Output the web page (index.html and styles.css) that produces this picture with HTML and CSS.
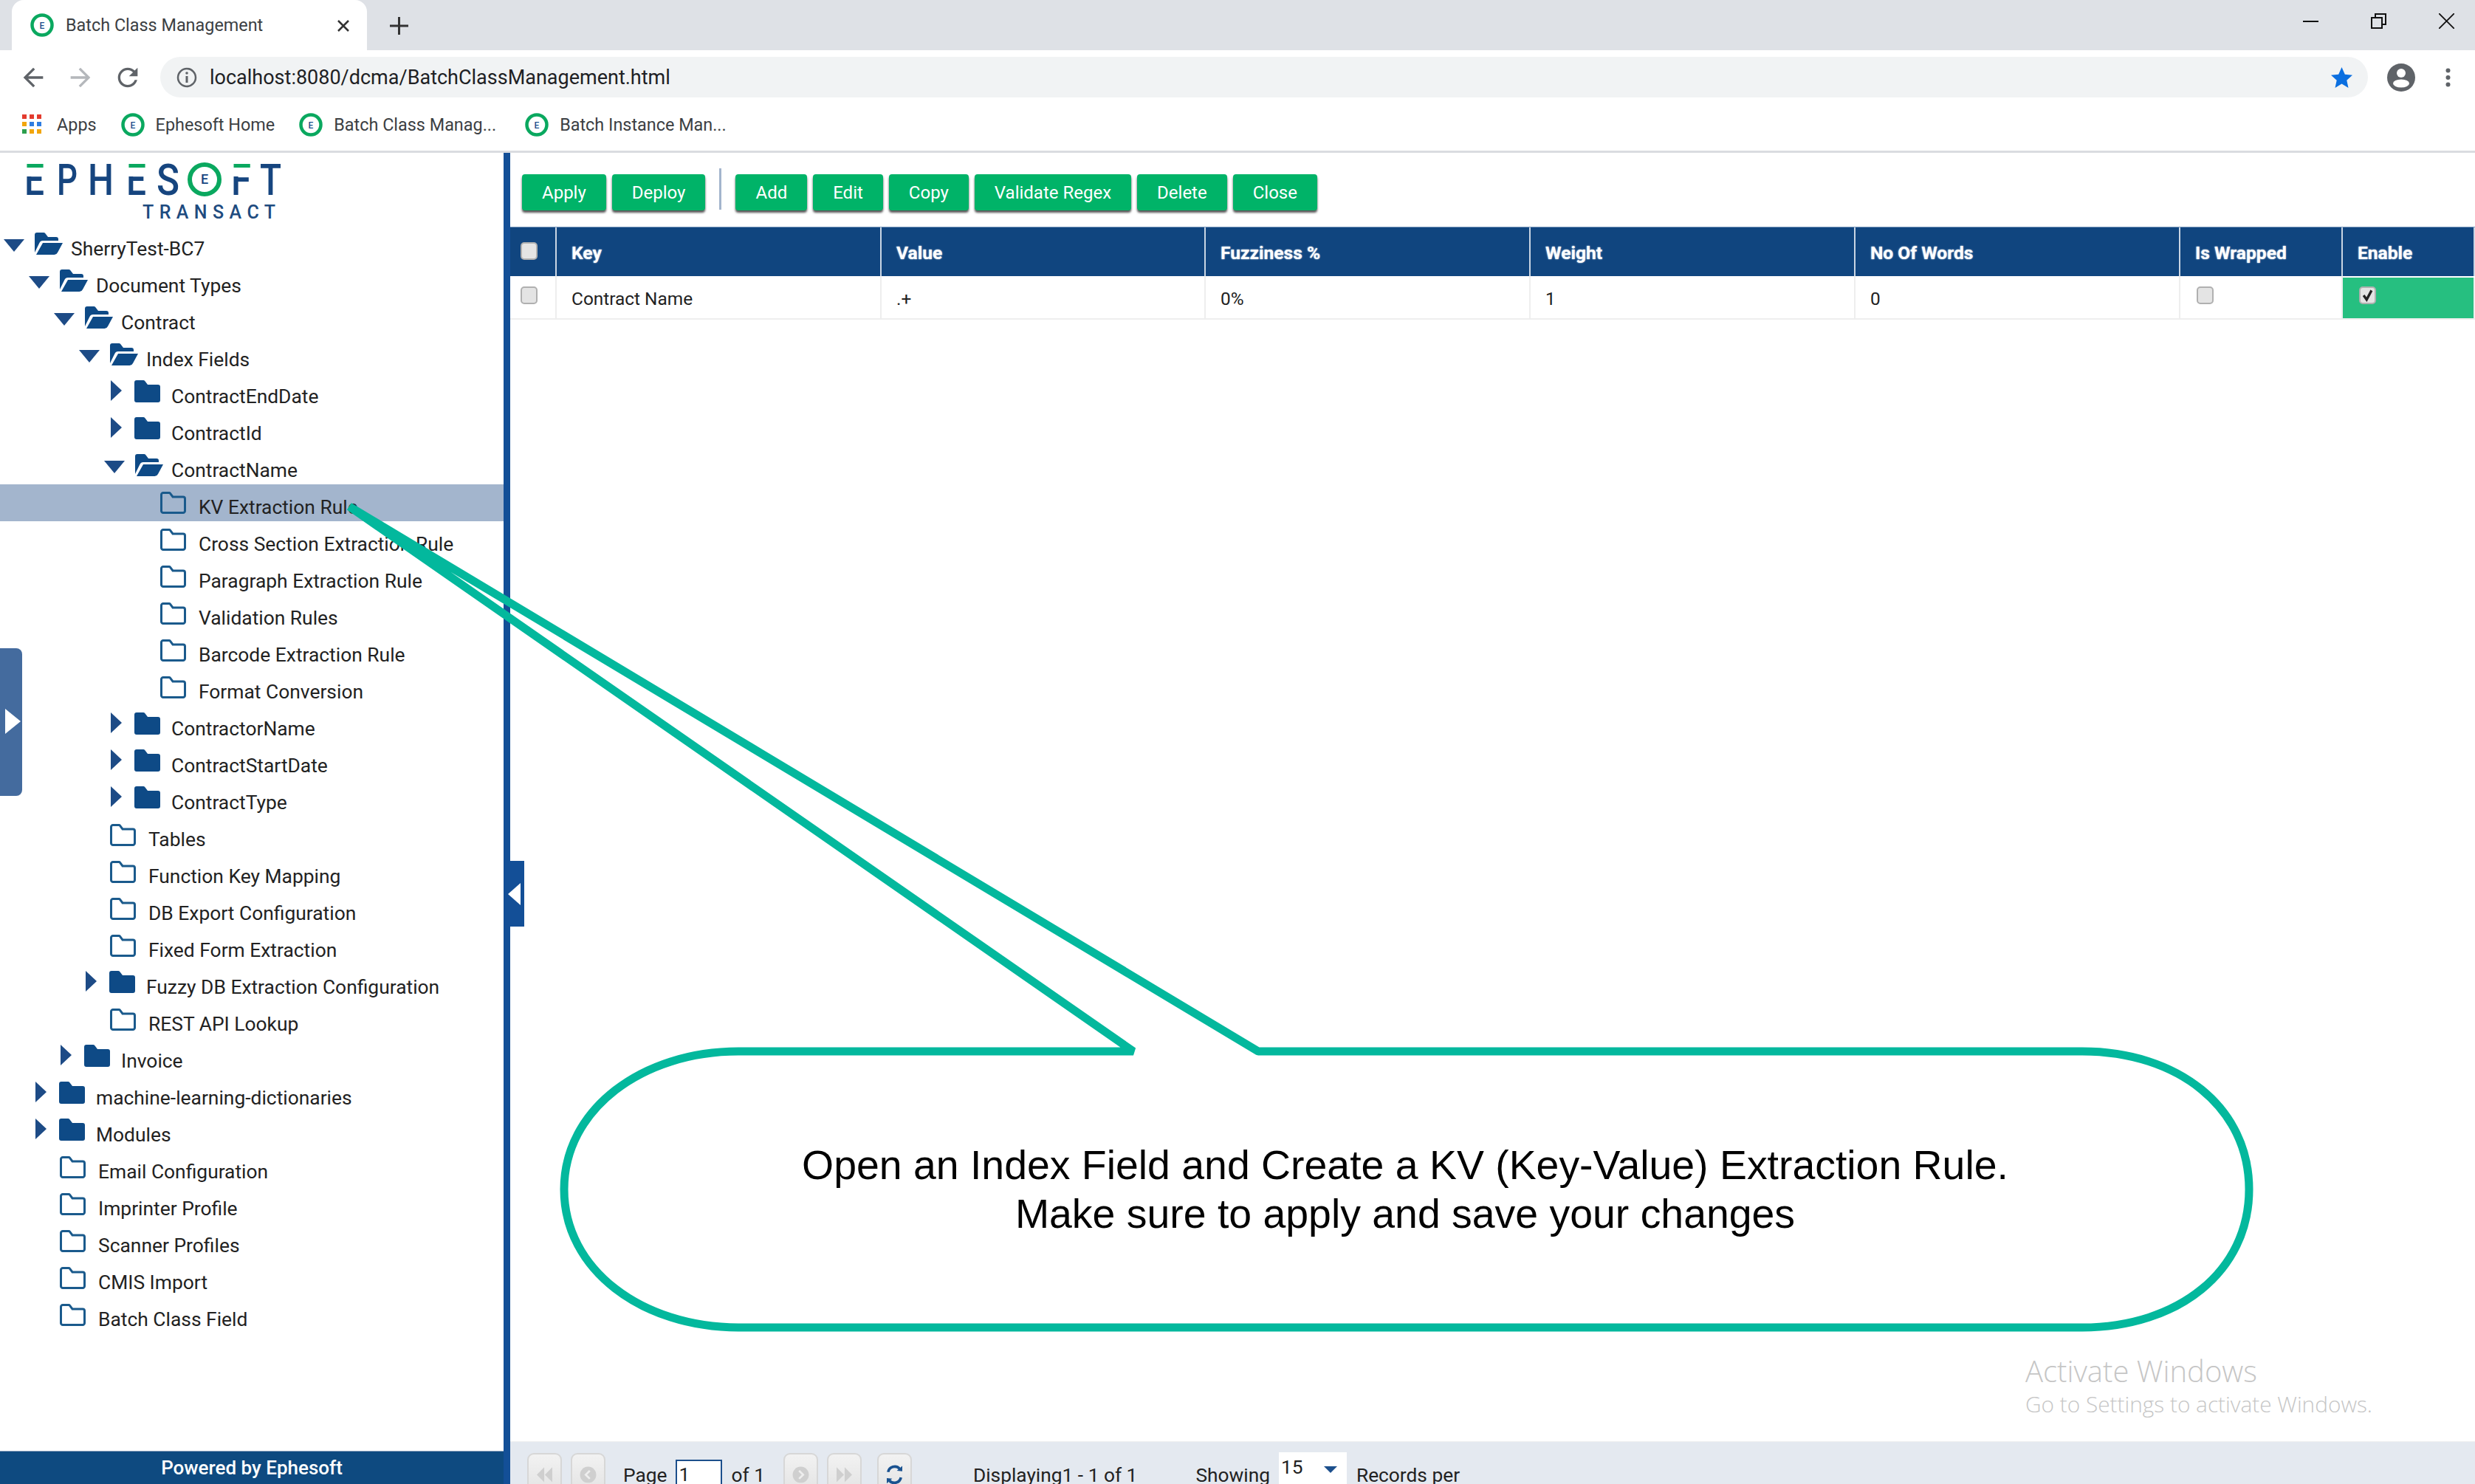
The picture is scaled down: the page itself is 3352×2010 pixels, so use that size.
FILE: index.html
```html
<!DOCTYPE html>
<html>
<head>
    <meta charset="utf-8">
    <title>Batch Class Management</title>
    <link rel="stylesheet" href="styles.css">
</head>
<body>
    <svg class="icon-defs" width="0" height="0">
        <symbol id="fav" viewBox="0 0 32 32">
            <ellipse cx="16" cy="16" rx="13.5" ry="13.5" fill="none" stroke="#0aa85f" stroke-width="4.5"/>
            <text x="16" y="20.500" text-anchor="middle" font-family="Roboto" font-size="12" font-weight="500" fill="#1d4f8c">E</text>
        </symbol>
        <symbol id="folder-closed" viewBox="0 0 35 30">
            <path d="M3 0h9a3 3 0 0 1 2.4 1.2L18 6h14a3 3 0 0 1 3 3v18a3 3 0 0 1-3 3H3a3 3 0 0 1-3-3V3a3 3 0 0 1 3-3z" fill="#0e4a86"/>
        </symbol>
        <symbol id="folder-open" viewBox="0 0 39 30">
            <path d="M4 0h9a3 3 0 0 1 2.4 1.2L19 6h11a3 3 0 0 1 3 3v2H12a5 5 0 0 0-4.6 3L1 27V3a3 3 0 0 1 3-3z" fill="#0e4a86"/>
            <path d="M12 14h27l-7 13a5 5 0 0 1-4.400 3H3z" fill="#0e4a86"/>
        </symbol>
        <symbol id="folder-leaf" viewBox="0 0 35 30">
            <path d="M4 1.500h8a2 2 0 0 1 1.600.800L17 7h14a2.500 2.500 0 0 1 2.500 2.500V26a2.500 2.500 0 0 1-2.500 2.500H4A2.500 2.500 0 0 1 1.500 26V4A2.500 2.500 0 0 1 4 1.500z" fill="none" stroke="#1a5a8c" stroke-width="3"/>
        </symbol>
    </svg>

    <div class="browser">
        <div class="tabstrip">
            <div class="tab">
                <svg class="fav-tab"><use href="#fav"/></svg>
                <span class="tab-title">Batch Class Management</span>
                <svg class="tab-close" viewBox="0 0 18 16"><path d="M2 1l14 14M16 1L2 15" stroke="#333" stroke-width="2.500"/></svg>
            </div>
            <svg class="new-tab" viewBox="0 0 25 24"><path d="M12.500 0v24M0 12h25" stroke="#333" stroke-width="3"/></svg>
            <div class="win-controls">
                <svg class="win-btn" viewBox="0 0 21 21"><path d="M0 11h21" stroke="#111" stroke-width="2"/></svg>
                <svg class="win-btn" viewBox="0 0 21 21"><path d="M1 6h14v14H1zM6 6V1h14v14h-5" fill="none" stroke="#111" stroke-width="2"/></svg>
                <svg class="win-btn" viewBox="0 0 21 21"><path d="M0 0l21 21M21 0L0 21" stroke="#111" stroke-width="1.800"/></svg>
            </div>
        </div>

        <div class="navbar">
            <svg class="nav-icon" viewBox="0 0 24 24"><path d="M20 11H7.830l5.590-5.590L12 4l-8 8 8 8 1.410-1.410L7.830 13H20v-2z" fill="#5f6368"/></svg>
            <svg class="nav-icon" viewBox="0 0 24 24"><path d="M4 11h12.170l-5.590-5.590L12 4l8 8-8 8-1.410-1.410L16.170 13H4v-2z" fill="#b4b7bb"/></svg>
            <svg class="nav-icon" viewBox="0 0 24 24"><path d="M17.650 6.350C16.200 4.900 14.210 4 12 4c-4.420 0-7.990 3.580-7.990 8s3.570 8 7.990 8c3.730 0 6.840-2.550 7.730-6h-2.080c-.82 2.330-3.040 4-5.650 4-3.310 0-6-2.690-6-6s2.690-6 6-6c1.660 0 3.140.69 4.220 1.780L13 11h7V4l-2.350 2.350z" fill="#5f6368"/></svg>
            <div class="address">
                <svg class="info-icon" viewBox="0 0 28 28">
                    <circle cx="14" cy="14" r="12" fill="none" stroke="#5f6368" stroke-width="2.500"/>
                    <path d="M14 12v9" stroke="#5f6368" stroke-width="3"/>
                    <circle cx="14" cy="8" r="1.800" fill="#5f6368"/>
                </svg>
                <span class="url">localhost:8080/dcma/BatchClassManagement.html</span>
                <svg class="star" viewBox="0 0 29 28"><path d="M14.500 0l4.300 9.700 10.200 1-7.700 7 2.200 10.300-9-5.400-9 5.400 2.200-10.300-7.700-7 10.200-1z" fill="#0b6fe0"/></svg>
            </div>
            <svg class="avatar" viewBox="0 0 38 38">
                <circle cx="19" cy="19" r="19" fill="#5f6368"/>
                <circle cx="19" cy="13" r="6" fill="#fff"/>
                <ellipse cx="19" cy="27" rx="11" ry="5.500" fill="#fff"/>
            </svg>
            <svg class="dots" viewBox="0 0 7 26">
                <circle cx="3.500" cy="3.500" r="3" fill="#5f6368"/>
                <circle cx="3.500" cy="13" r="3" fill="#5f6368"/>
                <circle cx="3.500" cy="22.500" r="3" fill="#5f6368"/>
            </svg>
        </div>

        <div class="bookmarks">
            <svg class="apps-icon" viewBox="0 0 26 27">
                <rect x="0" y="0" width="6" height="6" fill="#e33b2e"/><rect x="10" y="0" width="6" height="6" fill="#e33b2e"/><rect x="20" y="0" width="6" height="6" fill="#e33b2e"/>
                <rect x="0" y="10" width="6" height="6" fill="#f2a60c"/><rect x="10" y="10" width="6" height="6" fill="#2f7de1"/><rect x="20" y="10" width="6" height="6" fill="#2f7de1"/>
                <rect x="0" y="20" width="6" height="6" fill="#2d9f4e"/><rect x="10" y="20" width="6" height="6" fill="#f2a60c"/><rect x="20" y="20" width="6" height="6" fill="#f2a60c"/>
            </svg>
            <span class="bm-text bm-apps">Apps</span>
            <svg class="fav-bm"><use href="#fav"/></svg>
            <span class="bm-text">Ephesoft Home</span>
            <svg class="fav-bm"><use href="#fav"/></svg>
            <span class="bm-text bm-elided">Batch Class Manag...</span>
            <svg class="fav-bm"><use href="#fav"/></svg>
            <span class="bm-text">Batch Instance Man...</span>
        </div>

        <div class="app">
            <div class="sidebar">
                <svg class="logo" viewBox="0 0 400 99">
                    <defs>
                        <linearGradient id="bar-e" gradientUnits="userSpaceOnUse" x1="0" y1="14" x2="0" y2="58">
                            <stop offset="0" stop-color="#0aa85f"/><stop offset=".125" stop-color="#0aa85f"/>
                            <stop offset=".125" stop-color="#fff"/><stop offset=".42" stop-color="#fff"/>
                            <stop offset=".42" stop-color="#16457f"/><stop offset="1" stop-color="#16457f"/>
                        </linearGradient>
                    </defs>
                    <g class="logo-word">
                        <text x="33" y="57" textLength="27" lengthAdjust="spacingAndGlyphs" fill="url(#bar-e)">E</text>
                        <text x="77" y="57" textLength="28" lengthAdjust="spacingAndGlyphs">P</text>
                        <text x="119" y="57" textLength="35" lengthAdjust="spacingAndGlyphs">H</text>
                        <text x="171" y="57" textLength="27" lengthAdjust="spacingAndGlyphs" fill="url(#bar-e)">E</text>
                        <text x="212" y="57" textLength="31" lengthAdjust="spacingAndGlyphs">S</text>
                        <text x="313" y="57" textLength="27" lengthAdjust="spacingAndGlyphs" fill="url(#bar-e)">F</text>
                        <text x="352" y="57" textLength="29" lengthAdjust="spacingAndGlyphs">T</text>
                    </g>
                    <circle cx="277" cy="36" r="20" fill="none" stroke="#0aa85f" stroke-width="6"/>
                    <text class="logo-mini" x="277" y="42" text-anchor="middle">E</text>
                    <text class="logo-sub" x="193" y="89" textLength="180" lengthAdjust="spacing">TRANSACT</text>
                </svg>

                <div class="tree">
                    <div class="row lvl-0"><span class="slot"><i class="arrow-down"></i></span><svg class="ic-open"><use href="#folder-open"/></svg><span class="label">SherryTest-BC7</span></div>
                    <div class="row lvl-1"><span class="slot"><i class="arrow-down"></i></span><svg class="ic-open"><use href="#folder-open"/></svg><span class="label">Document Types</span></div>
                    <div class="row lvl-2"><span class="slot"><i class="arrow-down"></i></span><svg class="ic-open"><use href="#folder-open"/></svg><span class="label">Contract</span></div>
                    <div class="row lvl-3"><span class="slot"><i class="arrow-down"></i></span><svg class="ic-open"><use href="#folder-open"/></svg><span class="label">Index Fields</span></div>
                    <div class="row lvl-4"><span class="slot"><i class="arrow-right"></i></span><svg class="ic-closed"><use href="#folder-closed"/></svg><span class="label">ContractEndDate</span></div>
                    <div class="row lvl-4"><span class="slot"><i class="arrow-right"></i></span><svg class="ic-closed"><use href="#folder-closed"/></svg><span class="label">ContractId</span></div>
                    <div class="row lvl-4"><span class="slot"><i class="arrow-down"></i></span><svg class="ic-open"><use href="#folder-open"/></svg><span class="label">ContractName</span></div>
                    <div class="row lvl-5 selected"><span class="slot slot-leaf"></span><svg class="ic-leaf"><use href="#folder-leaf"/></svg><span class="label">KV Extraction Rule</span></div>
                    <div class="row lvl-5"><span class="slot slot-leaf"></span><svg class="ic-leaf"><use href="#folder-leaf"/></svg><span class="label">Cross Section Extraction Rule</span></div>
                    <div class="row lvl-5"><span class="slot slot-leaf"></span><svg class="ic-leaf"><use href="#folder-leaf"/></svg><span class="label">Paragraph Extraction Rule</span></div>
                    <div class="row lvl-5"><span class="slot slot-leaf"></span><svg class="ic-leaf"><use href="#folder-leaf"/></svg><span class="label">Validation Rules</span></div>
                    <div class="row lvl-5"><span class="slot slot-leaf"></span><svg class="ic-leaf"><use href="#folder-leaf"/></svg><span class="label">Barcode Extraction Rule</span></div>
                    <div class="row lvl-5"><span class="slot slot-leaf"></span><svg class="ic-leaf"><use href="#folder-leaf"/></svg><span class="label">Format Conversion</span></div>
                    <div class="row lvl-4"><span class="slot"><i class="arrow-right"></i></span><svg class="ic-closed"><use href="#folder-closed"/></svg><span class="label">ContractorName</span></div>
                    <div class="row lvl-4"><span class="slot"><i class="arrow-right"></i></span><svg class="ic-closed"><use href="#folder-closed"/></svg><span class="label">ContractStartDate</span></div>
                    <div class="row lvl-4"><span class="slot"><i class="arrow-right"></i></span><svg class="ic-closed"><use href="#folder-closed"/></svg><span class="label">ContractType</span></div>
                    <div class="row lvl-3"><span class="slot slot-leaf"></span><svg class="ic-leaf"><use href="#folder-leaf"/></svg><span class="label">Tables</span></div>
                    <div class="row lvl-3"><span class="slot slot-leaf"></span><svg class="ic-leaf"><use href="#folder-leaf"/></svg><span class="label">Function Key Mapping</span></div>
                    <div class="row lvl-3"><span class="slot slot-leaf"></span><svg class="ic-leaf"><use href="#folder-leaf"/></svg><span class="label">DB Export Configuration</span></div>
                    <div class="row lvl-3"><span class="slot slot-leaf"></span><svg class="ic-leaf"><use href="#folder-leaf"/></svg><span class="label">Fixed Form Extraction</span></div>
                    <div class="row lvl-3"><span class="slot"><i class="arrow-right"></i></span><svg class="ic-closed"><use href="#folder-closed"/></svg><span class="label">Fuzzy DB Extraction Configuration</span></div>
                    <div class="row lvl-3"><span class="slot slot-leaf"></span><svg class="ic-leaf"><use href="#folder-leaf"/></svg><span class="label">REST API Lookup</span></div>
                    <div class="row lvl-2"><span class="slot"><i class="arrow-right"></i></span><svg class="ic-closed"><use href="#folder-closed"/></svg><span class="label">Invoice</span></div>
                    <div class="row lvl-1"><span class="slot"><i class="arrow-right"></i></span><svg class="ic-closed"><use href="#folder-closed"/></svg><span class="label">machine-learning-dictionaries</span></div>
                    <div class="row lvl-1"><span class="slot"><i class="arrow-right"></i></span><svg class="ic-closed"><use href="#folder-closed"/></svg><span class="label">Modules</span></div>
                    <div class="row lvl-1"><span class="slot slot-leaf"></span><svg class="ic-leaf"><use href="#folder-leaf"/></svg><span class="label">Email Configuration</span></div>
                    <div class="row lvl-1"><span class="slot slot-leaf"></span><svg class="ic-leaf"><use href="#folder-leaf"/></svg><span class="label">Imprinter Profile</span></div>
                    <div class="row lvl-1"><span class="slot slot-leaf"></span><svg class="ic-leaf"><use href="#folder-leaf"/></svg><span class="label">Scanner Profiles</span></div>
                    <div class="row lvl-1"><span class="slot slot-leaf"></span><svg class="ic-leaf"><use href="#folder-leaf"/></svg><span class="label">CMIS Import</span></div>
                    <div class="row lvl-1"><span class="slot slot-leaf"></span><svg class="ic-leaf"><use href="#folder-leaf"/></svg><span class="label">Batch Class Field</span></div>
                </div>

                <div class="powered">Powered by Ephesoft</div>
            </div>

            <div class="divider"></div>

            <div class="main">
                <div class="actions">
                    <button class="btn">Apply</button>
                    <button class="btn">Deploy</button>
                    <span class="sep"></span>
                    <button class="btn">Add</button>
                    <button class="btn">Edit</button>
                    <button class="btn">Copy</button>
                    <button class="btn">Validate Regex</button>
                    <button class="btn">Delete</button>
                    <button class="btn">Close</button>
                </div>

                <div class="grid grid-head">
                    <div class="cell cell-check"><span class="check"></span></div>
                    <div class="cell">Key</div>
                    <div class="cell">Value</div>
                    <div class="cell">Fuzziness %</div>
                    <div class="cell">Weight</div>
                    <div class="cell">No Of Words</div>
                    <div class="cell">Is Wrapped</div>
                    <div class="cell">Enable</div>
                </div>
                <div class="grid grid-row">
                    <div class="cell cell-check"><span class="check"></span></div>
                    <div class="cell">Contract Name</div>
                    <div class="cell">.+</div>
                    <div class="cell">0%</div>
                    <div class="cell">1</div>
                    <div class="cell">0</div>
                    <div class="cell cell-box"><span class="check"></span></div>
                    <div class="cell cell-box cell-on">
                        <span class="check"><svg viewBox="0 0 23 24"><path d="M5 12l5 7 8-15" fill="none" stroke="#222" stroke-width="4"/></svg></span>
                    </div>
                </div>

                <div class="grid-empty"></div>

                <div class="pager">
                    <span class="pg-btn pg-first"><svg viewBox="0 0 47 46"><path d="M23 19L12 30l11 11zM35 19L24 30l11 11z" fill="#cfcfcf"/></svg></span>
                    <span class="pg-btn"><svg viewBox="0 0 47 46"><circle cx="23.500" cy="30" r="12" fill="#cfcfcf"/><path d="M26 24l-6 6 6 6" fill="none" stroke="#eee" stroke-width="3"/></svg></span>
                    <span class="pg-text pg-page">Page</span>
                    <span class="pg-input">1</span>
                    <span class="pg-text pg-of">of 1</span>
                    <span class="pg-btn pg-next"><svg viewBox="0 0 47 46"><circle cx="23.500" cy="30" r="12" fill="#cfcfcf"/><path d="M21 24l6 6-6 6" fill="none" stroke="#eee" stroke-width="3"/></svg></span>
                    <span class="pg-btn"><svg viewBox="0 0 47 46"><path d="M12 19l11 11-11 11zM24 19l11 11-11 11z" fill="#cfcfcf"/></svg></span>
                    <span class="pg-btn pg-refresh"><svg viewBox="0 0 47 46"><path d="M14 26a10 10 0 0 1 17-5M33 34a10 10 0 0 1-17 5" fill="none" stroke="#1a5290" stroke-width="4"/><path d="M27 24l8 1v-8zM20 36l-8-1v8z" fill="#1a5290"/></svg></span>
                    <span class="pg-text pg-display">Displaying1 - 1 of 1</span>
                    <span class="pg-text pg-showing">Showing</span>
                    <span class="pg-select">15<i class="pg-caret"></i></span>
                    <span class="pg-text pg-records">Records per</span>
                </div>
            </div>
        </div>
    </div>

    <!-- things drawn over the page -->
    <div class="handle-left"><i class="tri-right"></i></div>
    <div class="handle-mid"><i class="tri-left"></i></div>

    <svg class="callout" viewBox="0 0 3352 2010">
        <path d="M2820 1424C2950 1424 3046 1500 3046 1611S2950 1798 2820 1798H1000C870 1798 764 1720 764 1611S870 1424 1000 1424H1535L473 686 1704 1424Z" fill="none" stroke="#03b89d" stroke-width="11" stroke-linejoin="bevel"/>
    </svg>
    <div class="callout-text">Open an Index Field and Create a KV (Key-Value) Extraction Rule.<br>Make sure to apply and save your changes</div>

    <div class="activate">
        <div class="activate-big">Activate Windows</div>
        <div class="activate-small">Go to Settings to activate Windows.</div>
    </div>
</body>
</html>
```

FILE: styles.css
```css
html, body {
    margin: 0;
    padding: 0;
    width: 3352px;
    height: 2010px;
    overflow: hidden;
    background: white;
    font-family: Roboto, "Liberation Sans", sans-serif;
    color: #222;
}

.icon-defs {
    position: absolute;
}

.browser {
    display: flex;
    flex-direction: column;
    height: 2010px;
}

/* browser chrome */
.tabstrip {
    display: flex;
    align-items: flex-start;
    height: 68px;
    background: #dee1e6;
    flex: none;
}

.tab {
    position: relative;
    display: flex;
    align-items: center;
    width: 481px;
    height: 68px;
    margin-left: 16px;
    background: white;
    border-radius: 16px 16px 0 0;
    box-sizing: border-box;
    padding-left: 25px;
}

.fav-tab {
    width: 32px;
    height: 32px;
}

.tab-title {
    margin-left: 16px;
    font-size: 23.4px;
    color: #3c4043;
}

.tab-close {
    position: absolute;
    left: 440px;
    top: 27px;
    width: 18px;
    height: 16px;
}

.new-tab {
    width: 25px;
    height: 24px;
    margin: 23px 0 0 31px;
}

.win-controls {
    display: flex;
    gap: 71px;
    margin: 18px 28px 0 auto;
}

.win-btn {
    width: 21px;
    height: 21px;
}

.navbar {
    display: flex;
    align-items: center;
    height: 70px;
    padding: 3px 0 0 25px;
    box-sizing: border-box;
    gap: 24px;
    flex: none;
}

.nav-icon {
    width: 40px;
    height: 40px;
}

.address {
    display: flex;
    align-items: center;
    width: 2990px;
    height: 55px;
    background: #f1f3f4;
    border-radius: 28px;
    box-sizing: border-box;
    padding: 0 21px 0 22px;
}

.info-icon {
    width: 28px;
    height: 28px;
}

.url {
    margin-left: 17px;
    font-size: 27px;
    color: #202124;
}

.star {
    width: 29px;
    height: 28px;
    margin-left: auto;
}

.avatar {
    width: 38px;
    height: 38px;
    margin-left: 2px;
}

.dots {
    width: 7px;
    height: 26px;
    margin-left: 17px;
}

.bookmarks {
    display: flex;
    align-items: center;
    height: 69px;
    padding: 0 0 5px 30px;
    box-sizing: border-box;
    border-bottom: 3px solid #dadce0;
    flex: none;
}

.apps-icon {
    width: 26px;
    height: 27px;
}

.bm-text {
    margin-left: 15px;
    margin-right: 33px;
    font-size: 23.4px;
    color: #3c4043;
}

.bm-apps {
    margin-left: 21px;
}

.bm-elided {
    margin-right: 39px;
}

.fav-bm {
    width: 32px;
    height: 32px;
}

/* application */
.app {
    display: flex;
    flex: 1;
    min-height: 0;
}

.sidebar {
    display: flex;
    flex-direction: column;
    width: 682px;
    flex: none;
}

.logo {
    width: 400px;
    height: 99px;
    flex: none;
}

.logo-word text {
    font-family: Roboto, sans-serif;
    font-size: 60px;
    font-weight: 500;
    fill: #16457f;
}

.logo-word text[fill] {
    fill: url(#bar-e);
}

.logo-mini {
    font-family: Roboto, sans-serif;
    font-size: 18px;
    font-weight: 500;
    fill: #16457f;
}

.logo-sub {
    font-family: Roboto, sans-serif;
    font-size: 25px;
    font-weight: 500;
    fill: #1e4b7f;
}

.tree {
    flex: 1;
}

.row {
    display: flex;
    align-items: flex-start;
    height: 50px;
    box-sizing: border-box;
}

.row.selected {
    background: #a3b5cd;
}

.lvl-1 { padding-left: 34px; }
.lvl-2 { padding-left: 68px; }
.lvl-3 { padding-left: 102px; }
.lvl-4 { padding-left: 136px; }
.lvl-5 { padding-left: 170px; }

.slot {
    display: block;
    width: 46px;
    height: 50px;
    flex: none;
}

.slot-leaf {
    width: 47px;
}

.arrow-down {
    display: block;
    width: 0;
    height: 0;
    margin: 18px 0 0 5px;
    border-left: 14px solid transparent;
    border-right: 14px solid transparent;
    border-top: 17px solid #1d4b86;
}

.arrow-right {
    display: block;
    width: 0;
    height: 0;
    margin: 9px 0 0 14px;
    border-top: 14px solid transparent;
    border-bottom: 14px solid transparent;
    border-left: 15px solid #1d4b86;
}

.ic-open {
    width: 39px;
    height: 30px;
    margin-top: 9px;
    flex: none;
}

.ic-closed {
    width: 35px;
    height: 30px;
    margin-top: 9px;
    flex: none;
}

.ic-leaf {
    width: 35px;
    height: 30px;
    margin-top: 10px;
    flex: none;
}

.label {
    margin-top: 11px;
    font-size: 26.4px;
    line-height: 40px;
    color: #222;
    white-space: nowrap;
}

.ic-open + .label { margin-left: 11px; }
.ic-closed + .label { margin-left: 15px; }
.ic-leaf + .label { margin-left: 17px; }

.powered {
    height: 45px;
    line-height: 45px;
    background: #0e4a80;
    border-top: 1px solid #8ea3bd;
    box-sizing: border-box;
    text-align: center;
    color: white;
    font-size: 26px;
    font-weight: 500;
    flex: none;
}

.divider {
    width: 9px;
    background: #134f97;
    flex: none;
}

.main {
    display: flex;
    flex-direction: column;
    flex: 1;
    min-width: 0;
}

.actions {
    display: flex;
    align-items: flex-start;
    gap: 8px;
    height: 100px;
    padding: 29px 0 0 16px;
    box-sizing: border-box;
    flex: none;
}

.btn {
    height: 49px;
    padding: 0 27px;
    border: none;
    border-radius: 4px;
    background: #00b368;
    box-shadow: 0 3px 3px #555;
    color: white;
    font-family: Roboto, sans-serif;
    font-size: 24px;
}

.sep {
    width: 3px;
    height: 56px;
    margin: -8px 11px 0 11px;
    background: #a3b5cd;
}

.grid {
    display: grid;
    grid-template-columns: 63px 440px 439px 440px 440px 440px 220px 179px;
    flex: none;
}

.grid-head {
    height: 67px;
    background: #10457f;
    border-top: 1px solid #7f9cbf;
    box-sizing: border-box;
    color: white;
    font-size: 24.6px;
    font-weight: 700;
    text-shadow: 0 0 2px #dfe8f2;
}

.grid-head .cell {
    padding: 9px 0 0 20px;
    line-height: 52px;
    border-right: 2px solid #c9d5e3;
    box-sizing: border-box;
}

.grid-row {
    height: 59px;
    border-bottom: 2px solid #eeeeee;
    box-sizing: border-box;
    font-size: 24.4px;
}

.grid-row .cell {
    padding: 6px 0 0 20px;
    line-height: 50px;
    border-right: 2px solid #eeeeee;
    box-sizing: border-box;
}

.grid .cell-check {
    padding: 0 0 0 14px;
}

.grid-head .cell-check .check {
    margin-top: 20px;
}

.grid-row .cell-check .check,
.cell-box .check {
    margin-top: 14px;
}

.grid-row .cell-box {
    padding: 0 0 0 22px;
}

.grid-row .cell-on {
    background: #26bf80;
    margin-top: 2px;
    height: 55px;
}

.grid-row .cell-on .check {
    margin-top: 12px;
}

.check {
    display: block;
    width: 23px;
    height: 24px;
    background: #e4e4e4;
    border: 2px solid #b0b0b0;
    border-radius: 5px;
    box-sizing: border-box;
    overflow: hidden;
}

.check svg {
    display: block;
    width: 100%;
    height: 100%;
}

.grid-empty {
    flex: 1;
}

/* pager, bottom edge is cut by the window */
.pager {
    display: flex;
    align-items: flex-start;
    height: 58px;
    background: #e4e9f0;
    border-top: 1px solid #f0f0f0;
    box-sizing: border-box;
    overflow: hidden;
    font-size: 26.3px;
    flex: none;
    padding-left: 23px;
}

.pg-btn {
    display: block;
    width: 47px;
    height: 60px;
    margin: 15px 12px 0 0;
    border: 2px solid #d7d7d7;
    border-radius: 9px;
    background: linear-gradient(#f2f2f2, #e2e2e2);
    box-sizing: border-box;
    flex: none;
}

.pg-btn svg {
    display: block;
    width: 43px;
    height: 42px;
}

.pg-text {
    margin-top: 30px;
    line-height: 30px;
    white-space: nowrap;
}

.pg-page {
    margin-left: 12px;
}

.pg-input {
    width: 63px;
    height: 50px;
    margin: 24px 12px 0 12px;
    border: 2px solid #1c4f8c;
    background: white;
    box-sizing: border-box;
    padding-left: 2px;
    line-height: 36px;
}

.pg-of {
    margin-right: 25px;
}

.pg-refresh {
    margin-left: 9px;
}

.pg-display {
    margin-left: 71px;
}

.pg-showing {
    margin-left: 79px;
}

.pg-select {
    position: relative;
    width: 92px;
    height: 60px;
    margin: 14px 13px 0 12px;
    padding-left: 3px;
    background: white;
    box-sizing: border-box;
    line-height: 40px;
}

.pg-caret {
    position: absolute;
    left: 61px;
    top: 19px;
    width: 0;
    height: 0;
    border-left: 9px solid transparent;
    border-right: 9px solid transparent;
    border-top: 9px solid #1c4f8c;
}

/* overlays */
.handle-left {
    position: absolute;
    left: 0;
    top: 878px;
    width: 30px;
    height: 200px;
    background: #446b9e;
    border-radius: 0 8px 8px 0;
}

.tri-right {
    position: absolute;
    left: 7px;
    top: 82px;
    width: 0;
    height: 0;
    border-top: 17px solid transparent;
    border-bottom: 17px solid transparent;
    border-left: 21px solid white;
}

.handle-mid {
    position: absolute;
    left: 682px;
    top: 1166px;
    width: 28px;
    height: 89px;
    background: #134f97;
}

.tri-left {
    position: absolute;
    left: 6px;
    top: 30px;
    width: 0;
    height: 0;
    border-top: 15px solid transparent;
    border-bottom: 15px solid transparent;
    border-right: 17px solid white;
}

.callout {
    position: absolute;
    left: 0;
    top: 0;
    width: 3352px;
    height: 2010px;
    pointer-events: none;
}

.callout-text {
    position: absolute;
    left: 764px;
    top: 1545px;
    width: 2278px;
    text-align: center;
    font-family: "Liberation Sans", Arial, sans-serif;
    font-size: 55.4px;
    line-height: 66px;
    color: black;
}

.activate {
    position: absolute;
    left: 2743px;
    top: 1832px;
    font-family: "Open Sans", sans-serif;
    font-weight: 300;
    color: #c6c6c6;
}

.activate-big {
    font-size: 40px;
    line-height: 50px;
}

.activate-small {
    font-size: 29.8px;
    line-height: 40px;
}
```
